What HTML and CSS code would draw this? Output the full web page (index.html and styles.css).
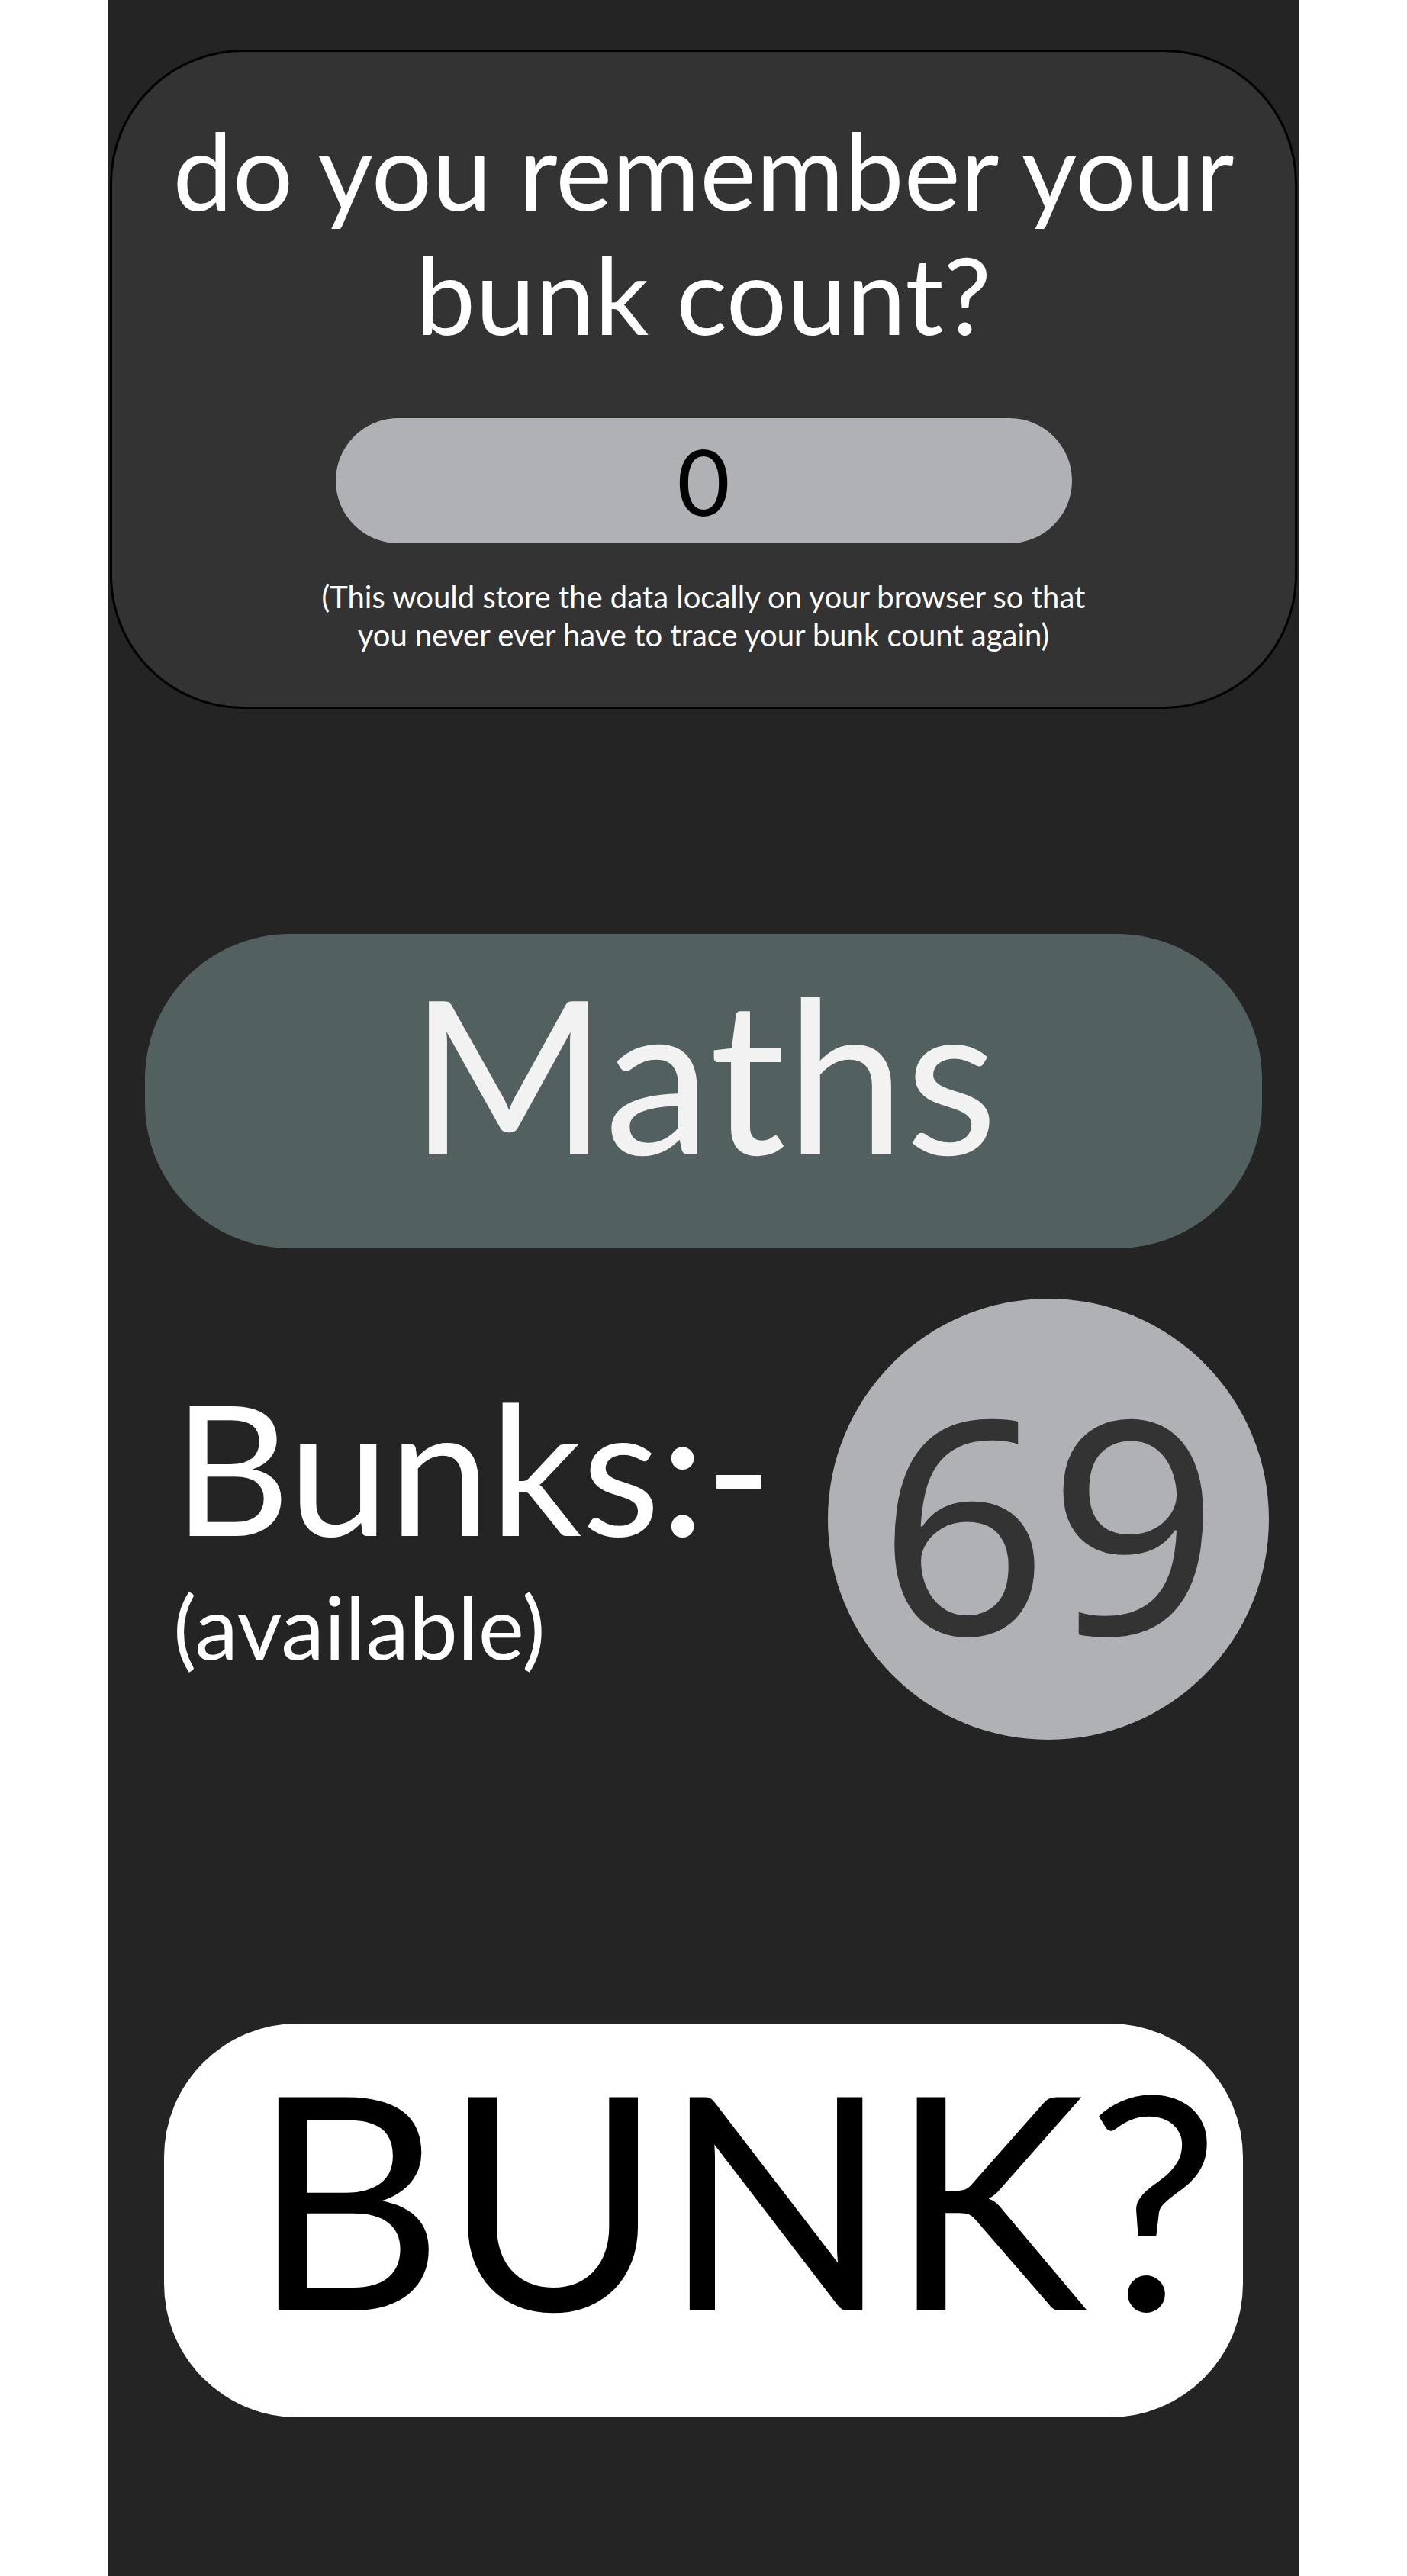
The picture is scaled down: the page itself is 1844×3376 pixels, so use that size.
FILE: index.html
```
<!DOCTYPE html>
<html lang="en">
<head>
    <meta charset="UTF-8">
    <meta name="viewport" content="width=device-width, initial-scale=1.0">
    <title>Bunk Counter</title>
    <link rel="stylesheet" href="styles.css">
</head>
<body>
    <div class="app">
        <div class="setup-card">
            <h1>do you remember your<br>bunk count?</h1>
            <input type="text" id="bunkInput" class="bunk-input" value="0">
            <p class="note">(This would store the data locally on your browser so that<br>you never ever have to trace your bunk count again)</p>
        </div>

        <div class="subject">Maths</div>

        <div class="bunk-row">
            <div class="bunk-label">
                <div class="bunk-title">Bunks:-</div>
                <div class="bunk-sub">(available)</div>
            </div>
            <div class="bunk-count" id="bunkCount">69</div>
        </div>

        <button class="bunk-btn" onclick="bunk()">BUNK?</button>
    </div>

    <script>
        function bunk() {
            const el = document.getElementById('bunkCount');
            let n = parseInt(el.textContent) || 0;
            if (n > 0) {
                el.textContent = n - 1;
            }
        }
    </script>
</body>
</html>
```

FILE: styles.css
```
body {
    margin: 0;
    background-color: #fff;
    font-family: Lato, "Noto Sans", sans-serif;
    color: #fff;
}

.app {
    width: 1560px;
    min-height: 100vh;
    margin: 0 auto;
    padding-top: 65px;
    box-sizing: border-box;
    background-color: #242424;
}

.setup-card {
    width: 1556px;
    margin: 0 auto;
    padding: 73px 0 69px;
    box-sizing: border-box;
    background-color: #333;
    border: 3px solid #000;
    border-radius: 175px;
    text-align: center;
}

.setup-card h1 {
    margin: 0;
    font-size: 140px;
    font-weight: normal;
    line-height: 163px;
}

.bunk-input {
    display: block;
    width: 965px;
    height: 164px;
    margin: 81px auto 0;
    padding: 0;
    border: none;
    border-radius: 82px;
    background-color: #b0b1b4;
    color: #000;
    font-family: Lato, "Noto Sans", sans-serif;
    font-size: 120px;
    text-align: center;
    outline: none;
}

.note {
    margin: 45px 0 0;
    font-size: 40px;
    line-height: 50px;
}

.subject {
    width: 1464px;
    height: 412px;
    margin: 295px auto 0;
    padding-top: 41px;
    box-sizing: border-box;
    border-radius: 190px;
    background-color: #536060;
    color: #f2f2f2;
    font-size: 280px;
    line-height: 280px;
    text-align: center;
}

.bunk-row {
    display: flex;
    align-items: center;
    justify-content: space-between;
    margin-top: 66px;
    padding: 0 39px 0 85px;
}

.bunk-label {
    padding-top: 15px;
}

.bunk-title {
    font-size: 237px;
    line-height: 240px;
}

.bunk-sub {
    margin-top: 25px;
    font-size: 114px;
    line-height: 130px;
}

.bunk-count {
    display: flex;
    align-items: center;
    justify-content: center;
    width: 578px;
    height: 578px;
    border-radius: 50%;
    background-color: #b0b1b4;
    color: #333;
    font-family: "Noto Sans", Lato, sans-serif;
    font-size: 390px;
    line-height: 1;
}

.bunk-btn {
    display: flex;
    align-items: center;
    justify-content: center;
    width: 1414px;
    height: 516px;
    margin: 372px auto 0;
    padding: 0 0 66px 84px;
    box-sizing: border-box;
    border: none;
    border-radius: 175px;
    background-color: #fff;
    color: #000;
    font-family: Lato, "Noto Sans", sans-serif;
    font-size: 390px;
    line-height: 1;
    cursor: pointer;
}
```
